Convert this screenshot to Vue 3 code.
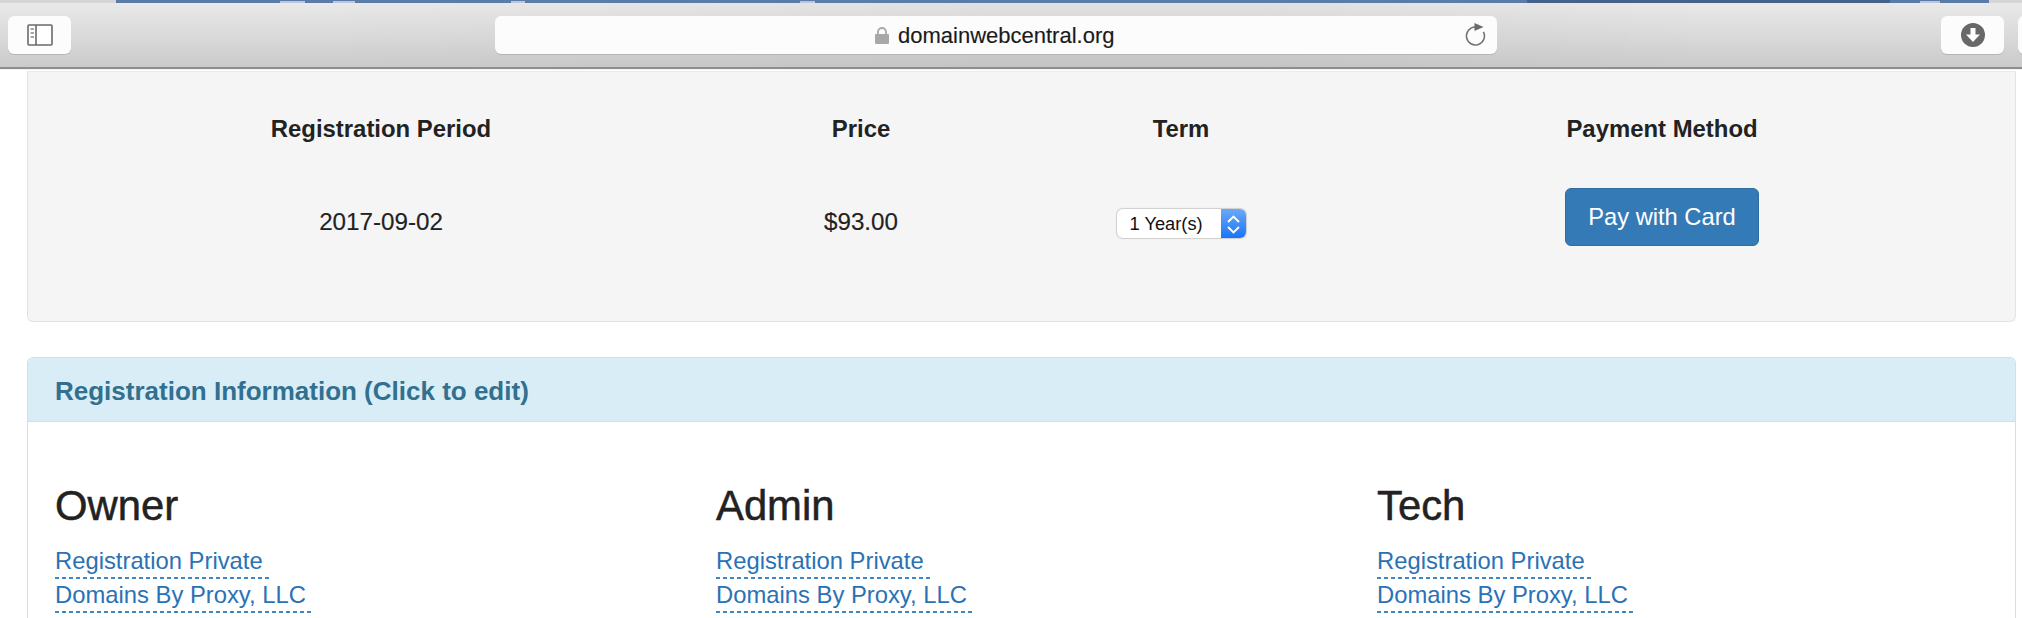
<script setup>
const headers = ['Registration Period', 'Price', 'Term', 'Payment Method']
const contacts = ['Owner', 'Admin', 'Tech']
const bump = 'linear-gradient(#5b7ba8 1px, #bcc6d6 1px)'
const strip = [
  { w: 116, c: '#d6d6d6' }, { w: 164, c: '#5b7ba8' }, { w: 25, c: bump }, { w: 28, c: '#5b7ba8' },
  { w: 22, c: bump }, { w: 156, c: '#5b7ba8' }, { w: 14, c: bump }, { w: 275, c: '#5b7ba8' },
  { w: 15, c: bump }, { w: 712, c: '#5b7ba8' }, { w: 363, c: '#46618a' }, { w: 30, c: '#5b7ba8' },
  { w: 20, c: bump }, { w: 49, c: '#5b7ba8' }, { w: 33, c: '#d6d6d6' }
]
</script>

<template>
  <div class="page">
    <div class="strip">
      <i v-for="(s, i) in strip" :key="i" class="seg" :style="{ width: s.w + 'px', background: s.c }"></i>
    </div>
    <header class="toolbar">
      <div class="btn side">
        <svg width="26" height="22" viewBox="0 0 26 22" fill="none">
          <rect x="1" y="1" width="24" height="20" rx="1" fill="#fff" stroke="#6a6a6a" stroke-width="1.6"/>
          <path d="M9 1v20" stroke="#6a6a6a" stroke-width="1.6"/>
          <path d="M3.5 5h3.5M3.5 9h3.5M3.5 13h3.5" stroke="#8a8a8a" stroke-width="1.6"/>
        </svg>
      </div>
      <div class="address">
        <svg class="lock" width="14" height="17" viewBox="0 0 14 17">
          <path d="M3 8V5a4 4 0 0 1 8 0v3" fill="none" stroke="#a8a8a8" stroke-width="1.8"/>
          <rect x="0" y="7" width="14" height="10" rx="1" fill="#a8a8a8"/>
        </svg>
        <span class="url">domainwebcentral.org</span>
        <svg class="reload" width="24" height="24" viewBox="0 0 24 24" fill="none">
          <path d="M10 4A9 9 0 1 0 18.4 8.8" stroke="#757575" stroke-width="1.6"/>
          <path d="M9.5 0 18.5 4 9.5 8Z" fill="#6a6a6a"/>
        </svg>
      </div>
      <div class="btn dl">
        <svg width="24" height="24" viewBox="0 0 24 24">
          <circle cx="12" cy="12" r="12" fill="#686868"/>
          <path d="M9.5 5h5v6.5H19L12 19 5 11.5h4.5Z" fill="#fff"/>
        </svg>
      </div>
      <div class="btn stub"></div>
    </header>
    <main class="content">
      <section class="well">
        <div class="grid">
          <div v-for="h in headers" :key="h" class="th">{{ h }}</div>
          <div class="td">2017-09-02</div>
          <div class="td">$93.00</div>
          <div class="td">
            <div class="select">
              <span class="sel-text">1 Year(s)</span>
              <span class="sel-arrows">
                <svg width="25" height="29" viewBox="0 0 25 29" fill="none">
                  <path d="M7 13 12.5 7.5 18 13M7 18 12.5 23.5 18 18" stroke="#fff" stroke-width="1.9"/>
                </svg>
              </span>
            </div>
          </div>
          <div class="td pay"><button class="pay-btn">Pay with Card</button></div>
        </div>
      </section>
      <section class="panel">
        <div class="panel-head">Registration Information (Click to edit)</div>
        <div class="panel-body">
          <div v-for="c in contacts" :key="c" class="contact">
            <h3>{{ c }}</h3>
            <a class="link">Registration Private</a>
            <a class="link">Domains By Proxy, LLC</a>
          </div>
        </div>
      </section>
    </main>
  </div>
</template>

<style scoped>
.page {
  width: 2022px;
  height: 618px;
  overflow: hidden;
  background: #fff;
  font-family: "Liberation Sans", Arial, sans-serif;
  color: #222;
}
.strip { display: flex; height: 3px; }
.seg { display: block; height: 100%; flex: none; }
.toolbar {
  height: 66px;
  box-sizing: border-box;
  display: flex;
  align-items: flex-start;
  padding: 13px 0 0 8px;
  background:
    linear-gradient(90deg, rgba(0,0,0,0) 15%, rgba(0,0,0,.035) 50%, rgba(0,0,0,.035) 62%, rgba(0,0,0,0) 85%),
    linear-gradient(#e9e9e9, #cbcbcb);
  border-bottom: 2px solid #8e8e8e;
  box-shadow: 0 1px 0 #f2f2f2;
  position: relative;
}
.btn {
  height: 38px;
  background: #fcfcfc;
  border-radius: 6px;
  box-shadow: 0 1px 0 #b5b5b5;
  display: flex;
  align-items: center;
  justify-content: center;
  flex: none;
}
.side { width: 63px; }
.address {
  width: 1002px;
  height: 38px;
  margin-left: 424px;
  background: #fcfcfc;
  border-radius: 6px;
  box-shadow: 0 1px 0 #b5b5b5;
  display: flex;
  align-items: center;
  flex: none;
  padding-left: 380px;
  box-sizing: border-box;
  position: relative;
}
.lock { flex: none; margin-top: 1px; }
.url { font-size: 22px; color: #1a1a1a; margin-left: 9px; line-height: 38px; padding-top: 1px; -webkit-text-stroke: 0.15px #1a1a1a; }
.reload { position: absolute; left: 970px; top: 7px; }
.dl { width: 63px; margin-left: 444px; }
.stub { width: 30px; margin-left: 14px; }

.content { padding: 2px 6px 0 27px; }
.well {
  height: 251px;
  box-sizing: border-box;
  background: #f5f5f5;
  border: 1px solid #e3e3e3;
  border-top: 0;
  border-radius: 0 0 6px 6px;
  padding: 38px 0 0 27px;
  box-shadow: inset 0 1px 1px rgba(0,0,0,.05);
}
.grid {
  display: grid;
  grid-template-columns: 652px 308px 332px 630px;
  grid-template-rows: 40px 68px;
  row-gap: 39px;
  text-align: center;
}
.th { font-size: 23.9px; font-weight: 700; line-height: 40px; color: #222; }
.td { font-size: 24.2px; color: #222; align-self: center; line-height: 30px; -webkit-text-stroke: 0.15px #222; }
.pay { align-self: start; -webkit-text-stroke: 0; }
.select {
  display: inline-flex;
  width: 129px;
  height: 29px;
  margin-top: 3px;
  box-sizing: border-box;
  border-radius: 6px;
  background: #fff;
  box-shadow: 0 0 1px 1px #cfcfcf;
  overflow: hidden;
  vertical-align: top;
  text-align: left;
  -webkit-text-stroke: 0;
}
.sel-text { flex: 1; font-size: 18.3px; line-height: 30px; padding-left: 13px; color: #111; }
.sel-arrows {
  width: 25px;
  background: linear-gradient(#6aa9f6, #1a75fb);
  display: flex;
}
.pay-btn {
  width: 194px;
  height: 58px;
  background: #337ab7;
  border: 1.5px solid #2e6da4;
  border-radius: 6px;
  color: #fff;
  font-family: inherit;
  font-size: 23.7px;
  padding: 0;
}
.panel {
  margin-top: 35px;
  border: 1px solid #bce8f1;
  border-radius: 6px 6px 0 0;
  border-bottom: 0;
  height: 300px;
}
.panel-head {
  height: 64px;
  box-sizing: border-box;
  background: #d9edf7;
  border-bottom: 1px solid #bce8f1;
  border-radius: 5px 5px 0 0;
  color: #31708f;
  font-size: 26px;
  font-weight: 700;
  line-height: 66px;
  padding-left: 27px;
}
.panel-body {
  display: grid;
  grid-template-columns: 661px 661px 1fr;
  padding: 0 0 0 27px;
}
.contact { padding-top: 61px; }
h3 {
  margin: 0 0 16px;
  font-size: 41.8px;
  font-weight: 400;
  line-height: 46px;
  color: #222;
  -webkit-text-stroke: 0.5px #222;
}
.link {
  display: block;
  width: fit-content;
  padding-right: 7px;
  padding-bottom: 2px;
  color: #2a72b5;
  font-size: 23.8px;
  line-height: 32px;
  background: repeating-linear-gradient(90deg, #3f87c4 0 4px, transparent 4px 7px) left bottom / 100% 2px no-repeat;
}
</style>
